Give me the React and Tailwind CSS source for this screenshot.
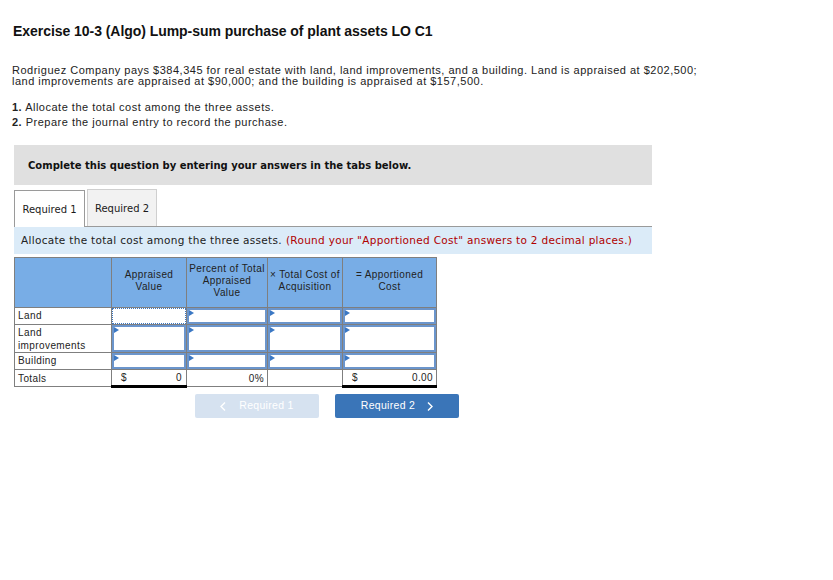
import React from 'react';

const sans = { fontFamily: '"Liberation Sans", Arial, sans-serif' };
const verdana = { fontFamily: '"DejaVu Sans", Verdana, sans-serif' };

function Marker() {
    return (
        <span className="absolute left-0 top-0 w-0 h-0 border-y-[3px] border-y-transparent border-l-[5px] border-l-[#3b78c4]"></span>
    );
}

function Chevron({ left }) {
    return (
        <svg width="6" height="9" viewBox="0 0 6 9" fill="none" stroke="currentColor" strokeWidth="1.4">
            {left ? <polyline points="5,0.5 1,4.5 5,8.5" /> : <polyline points="1,0.5 5,4.5 1,8.5" />}
        </svg>
    );
}

function InputCell({ focused, h }) {
    return (
        <td className="border border-[#7f7f7f] p-0 relative">
            {focused ? (
                <div className={`border border-dotted border-[#3b78c4] ${h}`}></div>
            ) : (
                <div className={`border-2 border-[#6b95cc] bg-white relative ${h}`}>
                    <Marker />
                </div>
            )}
        </td>
    );
}

function Row({ label, h, first }) {
    return (
        <tr>
            <td className="border border-[#7f7f7f] px-[3px] align-top leading-[13px] pt-[1px]">{label}</td>
            <InputCell focused={first} h={h} />
            <InputCell h={h} />
            <InputCell h={h} />
            <InputCell h={h} />
        </tr>
    );
}

export default function App() {
    return (
        <div className="w-[833px] h-[580px] bg-white text-[#1a1a1a] relative" style={sans}>
            {/* Title */}
            <h1 className="absolute left-[13px] top-[21px] text-[14px] font-bold tracking-[-0.05px] text-[#111]">
                Exercise 10-3 (Algo) Lump-sum purchase of plant assets LO C1
            </h1>

            <div className="pl-[12px] pt-[65px]">
                <p className="text-[11px] leading-[11px] tracking-[0.5px] text-[#222]">
                    Rodriguez Company pays $384,345 for real estate with land, land improvements, and a building. Land is appraised at $202,500;
                    <br />
                    land improvements are appraised at $90,000; and the building is appraised at $157,500.
                </p>
                <div className="mt-[13px] text-[11px] leading-[15px] tracking-[0.5px] text-[#222]">
                    <div><b>1.</b> Allocate the total cost among the three assets.</div>
                    <div><b>2.</b> Prepare the journal entry to record the purchase.</div>
                </div>
            </div>

            {/* Instruction box */}
            <div className="ml-[14px] mt-[15px] w-[638px] h-[40px] bg-[#e0e0e0] flex items-center pl-[14px]">
                <span className="text-[10px] font-bold text-[#111]" style={verdana}>
                    Complete this question by entering your answers in the tabs below.
                </span>
            </div>

            {/* Tabs */}
            <div className="ml-[14px] mt-[5px] w-[638px] flex items-end border-b border-[#9a9a9a] h-[37px]" style={verdana}>
                <div className="w-[71px] h-[37px] border border-b-0 border-[#9a9a9a] bg-white flex items-center justify-center text-[10px] -mb-px relative z-10">
                    Required 1
                </div>
                <div className="ml-[2px] w-[70px] h-[37px] border border-b-0 border-[#cfcfcf] bg-[#f2f2f2] flex items-center justify-center text-[10px]">
                    Required 2
                </div>
            </div>
            <div className="ml-[14px] w-[638px] h-[27px] bg-[#dbebf8] flex items-center pl-[7px] text-[10.5px] tracking-[0.3px]" style={verdana}>
                <span className="text-[#222]">Allocate the total cost among the three assets.</span>
                <span className="ml-[4px] text-[#b00000]">(Round your "Apportioned Cost" answers to 2 decimal places.)</span>
            </div>

            {/* Table */}
            <table className="ml-[14px] mt-[3px] border-collapse text-[10px] tracking-[0.4px] text-[#222] table-fixed" style={sans}>
                <colgroup>
                    <col className="w-[97px]" />
                    <col className="w-[75px]" />
                    <col className="w-[81px]" />
                    <col className="w-[75px]" />
                    <col className="w-[94px]" />
                </colgroup>
                <thead>
                    <tr className="bg-[#78ade6] h-[50px]">
                        <th className="border border-[#7f7f7f]"></th>
                        <th className="border border-[#7f7f7f] font-normal leading-[12px] align-middle pb-[3px]">Appraised<br />Value</th>
                        <th className="border border-[#7f7f7f] font-normal leading-[12px] align-top pt-[5px]">Percent of Total<br />Appraised<br />Value</th>
                        <th className="border border-[#7f7f7f] font-normal leading-[12px] align-middle pb-[3px]">× Total Cost of<br />Acquisition</th>
                        <th className="border border-[#7f7f7f] font-normal leading-[12px] align-middle pb-[3px]">= Apportioned<br />Cost</th>
                    </tr>
                </thead>
                <tbody>
                    <Row label="Land" h="h-[16px]" first />
                    <Row label={<>Land<br />improvements</>} h="h-[27px]" />
                    <Row label="Building" h="h-[16px]" />
                    <tr className="h-[17px]">
                        <td className="border border-[#7f7f7f] px-[3px]">Totals</td>
                        <td className="border border-[#7f7f7f] border-b-[3px] border-b-black pl-[9px] pr-[4px]">
                            <div className="flex justify-between"><span>$</span><span>0</span></div>
                        </td>
                        <td className="border border-[#7f7f7f] px-[3px] text-right">0%</td>
                        <td className="border border-[#7f7f7f]"></td>
                        <td className="border border-[#7f7f7f] border-b-[3px] border-b-black pl-[9px] pr-[3px]">
                            <div className="flex justify-between"><span>$</span><span>0.00</span></div>
                        </td>
                    </tr>
                </tbody>
            </table>

            {/* Nav buttons */}
            <div className="ml-[195px] mt-[6px] flex gap-[16px] text-[10.5px] tracking-[0.3px]" style={sans}>
                <div className="w-[124px] h-[24px] rounded-[2px] bg-[#d6e2f0] text-white flex items-center justify-center gap-[13px]">
                    <Chevron left /><span>Required 1</span>
                </div>
                <div className="w-[124px] h-[24px] rounded-[2px] bg-[#3a75b8] text-white flex items-center justify-center gap-[12px]">
                    <span>Required 2</span><Chevron />
                </div>
            </div>
        </div>
    );
}
